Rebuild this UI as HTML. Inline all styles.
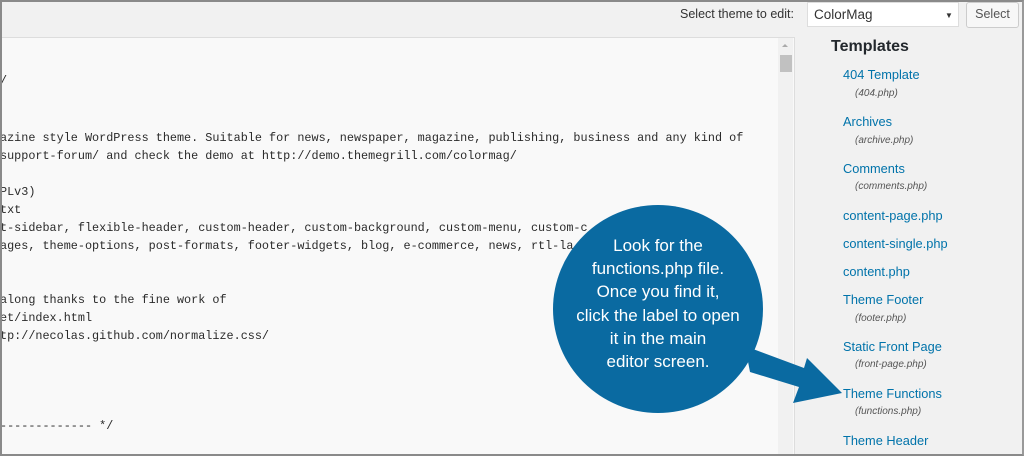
<!DOCTYPE html>
<html><head><style>
*{margin:0;padding:0;box-sizing:border-box}
body{width:1024px;height:456px;overflow:hidden;background:#f1f1f1;font-family:"Liberation Sans",sans-serif;position:relative}
.frame{position:absolute;left:0;top:0;width:1024px;height:456px;border:2px solid #8a8a8a;border-right-color:#999;z-index:10;pointer-events:none}
.editor{position:absolute;left:0;top:37px;width:795px;height:419px;background:#f9f9f9;border-top:1px solid #ddd;border-right:1px solid #ddd}
.code{position:absolute;left:0;top:0;font-family:"Liberation Mono",monospace;font-size:11.8px;color:#2a2a2a;white-space:pre}
.code div{position:absolute;left:0}
.sb{position:absolute;left:778px;top:38px;width:15px;height:418px;background:#f1f1f1}
.thumb{position:absolute;left:780px;top:55px;width:12px;height:17px;background:#c1c1c1}
.sel{position:absolute;font-size:13px;color:#333}
.side a{position:absolute;left:843px;color:#0073aa;font-size:12.8px;text-decoration:none;white-space:nowrap}
.side i{position:absolute;left:855px;color:#555;font-size:10px;white-space:nowrap}
.bubble{position:absolute;left:553px;top:205px;width:210px;height:208px;border-radius:50%;background:#0a6aa1;color:#fff;font-size:17px;line-height:23.2px;text-align:center;padding-top:29px}
</style></head><body>
<div class="editor"></div>
<div class="sb"></div><div class="thumb"></div>
<div style="position:absolute;left:782px;top:44px;width:0;height:0;border-left:3px solid transparent;border-right:3px solid transparent;border-bottom:3px solid #aaa"></div>
<div class="code">
<div style="top:74px">/</div>
<div style="top:131px">azine style WordPress theme. Suitable for news, newspaper, magazine, publishing, business and any kind of</div>
<div style="top:149px">support-forum/ and check the demo at http://demo.themegrill.com/colormag/</div>
<div style="top:185px">PLv3)</div>
<div style="top:203px">txt</div>
<div style="top:221px">t-sidebar, flexible-header, custom-header, custom-background, custom-menu, custom-c</div>
<div style="top:239px">ages, theme-options, post-formats, footer-widgets, blog, e-commerce, news, rtl-la</div>
<div style="top:293px">along thanks to the fine work of</div>
<div style="top:311px">et/index.html</div>
<div style="top:329px">tp://necolas.github.com/normalize.css/</div>
<div style="top:419px">------------- */</div>
</div>
<div class="sel" style="left:680px;top:7px;font-size:12.5px">Select theme to edit:</div>
<div style="position:absolute;left:807px;top:2px;width:152px;height:25px;background:#fff;border:1px solid #ddd"></div>
<div class="sel" style="left:814px;top:7px;font-size:13.5px">ColorMag</div>
<div style="position:absolute;left:945px;top:11px;font-size:8px;color:#333">▼</div>
<div style="position:absolute;left:966px;top:2px;width:53px;height:26px;background:#f7f7f7;border:1px solid #ccc;border-radius:3px;font-size:12.5px;color:#555;text-align:center;line-height:23px">Select</div>
<div style="position:absolute;left:831px;top:38px;font-size:16px;font-weight:bold;color:#23282d">Templates</div>
<div class="side">
<a style="top:67px">404 Template</a><i style="top:88px">(404.php)</i>
<a style="top:114px">Archives</a><i style="top:135px">(archive.php)</i>
<a style="top:161px">Comments</a><i style="top:181px">(comments.php)</i>
<a style="top:208px">content-page.php</a>
<a style="top:236px">content-single.php</a>
<a style="top:264px">content.php</a>
<a style="top:292px">Theme Footer</a><i style="top:313px">(footer.php)</i>
<a style="top:339px">Static Front Page</a><i style="top:359px">(front-page.php)</i>
<a style="top:386px">Theme Functions</a><i style="top:406px">(functions.php)</i>
<a style="top:433px">Theme Header</a>
</div>
<svg style="position:absolute;left:0;top:0" width="1024" height="456"><polygon points="745,346 750,372 799,387 793,403 842,393 807,358 804,368" fill="#0a6aa1"/></svg>
<div class="bubble">Look for the<br>functions.php file.<br>Once you find it,<br>click the label to open<br>it in the main<br>editor screen.</div>
<div class="frame"></div>
</body></html>
